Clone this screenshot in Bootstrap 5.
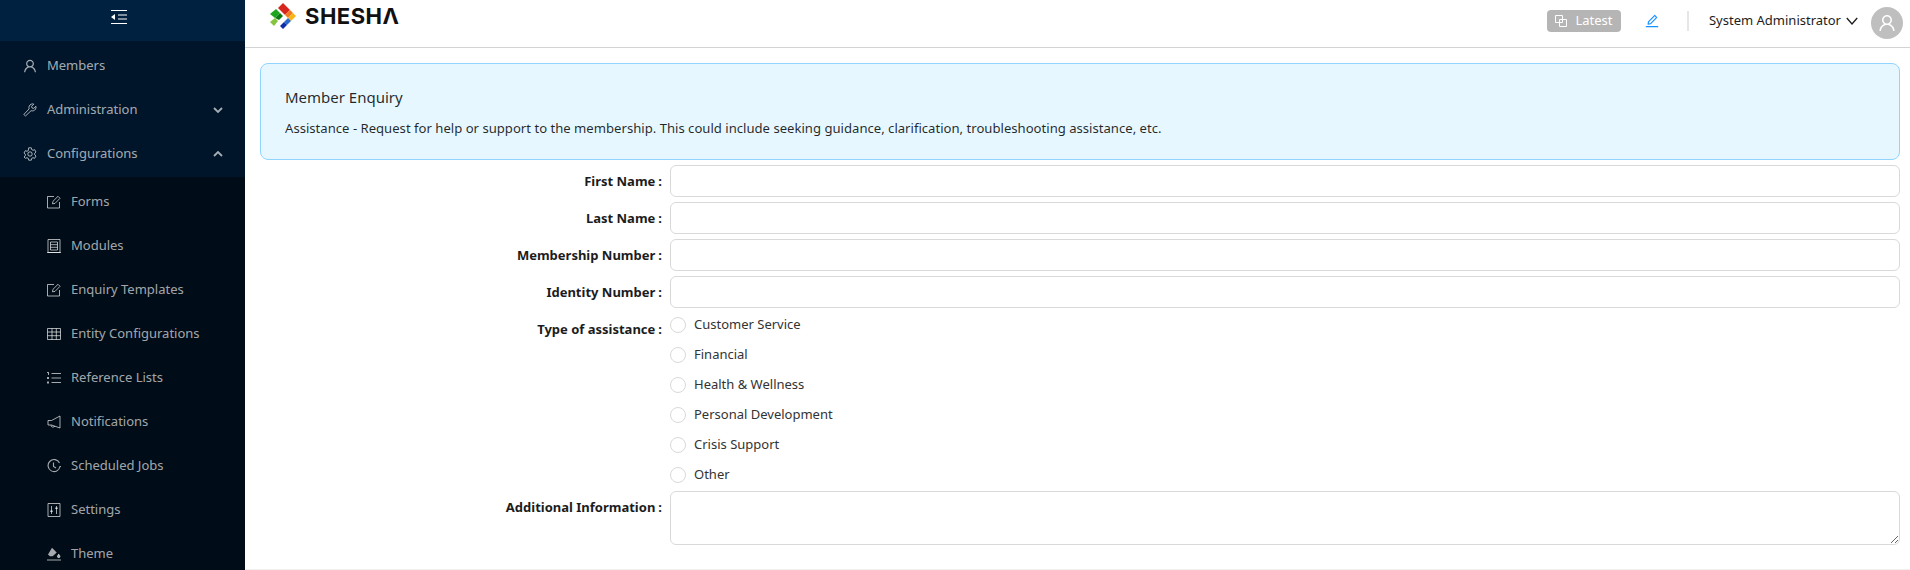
<!DOCTYPE html>
<html lang="en">
<head>
    <meta charset="UTF-8">
    <title>Member Enquiry</title>
    <link href="https://cdn.jsdelivr.net/npm/bootstrap@5.3.0/dist/css/bootstrap.min.css" rel="stylesheet">
    <style>
        html, body { height: 100%; }
        body {
            font-family: "Noto Sans", "Liberation Sans", sans-serif;
            font-size: 13px;
            color: rgba(0,0,0,.85);
            overflow: hidden;
        }
        .app-side {
            width: 245px;
            height: 570px;
            flex: none;
            background: #001529;
            color: rgba(255,255,255,.65);
            overflow: hidden;
        }
        .side-toggle {
            height: 41px;
            padding: 0 7px 7px 0;
            background: #002140;
            color: #fff;
        }
        .side-item {
            height: 40px;
            margin-bottom: 4px;
            padding: 2px 24px 0 23px;
            gap: 10px;
        }
        .side-group { height: 136px; padding-top: 4px; }
        .side-sub { background: #000c17; padding-top: 4px; }
        .side-sub .side-item { padding-left: 47px; }
        .side-ico { width: 14px; height: 14px; flex: none; }
        .side-caret { width: 10px; height: 10px; margin-left: auto; margin-right: -2px; }
        .app-main { min-width: 0; height: 570px; }
        .top-bar {
            height: 48px;
            border-bottom: 1px solid #d3d3d3;
            padding: 0 7px 0 25px;
        }
        .brand-box { margin-bottom: 16px; }
        .brand-name {
            font-family: Inter, "Liberation Sans", sans-serif;
            font-weight: 700;
            font-size: 22px;
            letter-spacing: .5px;
            color: #111;
            margin-left: 9px;
            line-height: 1;
        }
        .latest-tag {
            width: 74px;
            height: 22px;
            background: #b5b5b5;
            color: #fff;
            border-radius: 4px;
            gap: 8px;
        }
        .pen-btn { color: #1890ff; margin-left: 24px; line-height: 0; }
        .top-sep { width: 2px; height: 20px; background: #e6e6e6; margin: 0 20px 0 28px; }
        .user-tools { margin-bottom: 5px; }
        .user-name { color: #1d1d1d; }
        .user-caret { margin: 0 13px 0 5px; color: #1d1d1d; }
        .user-pic { width: 32px; height: 32px; margin-top: 4px; background: #bfbfbf; color: #fff; }
        .page-body { padding: 15px 10px 0 15px; border-bottom: 1px solid #f0f0f0; }
        .intro-box {
            height: 97px;
            padding: 21px 24px 0;
            margin-bottom: 5px;
            background: #e6f7ff;
            border: 1px solid #91d5ff;
            border-radius: 8px;
            color: rgba(0,0,0,.85);
        }
        .intro-title { font-size: 15px; line-height: 24px; margin-bottom: 9px; }
        .intro-text { font-size: 13.12px; line-height: 20px; }
        .field-row { display: flex; margin-bottom: 5px; }
        .field-label {
            width: 402px;
            flex: none;
            margin: 0 8px 0 0;
            text-align: right;
            font-weight: 700;
            color: #1c1c1c;
            line-height: 32px;
        }
        .field-label::after { content: ":"; margin-left: 3px; }
        .field-input.form-control {
            height: 32px;
            min-height: 0;
            padding: 4px 11px;
            font-size: 13px;
            border: 1px solid #d9d9d9;
            border-radius: 6px;
        }
        textarea.field-input.form-control { height: 54px; }
        .radio-line { height: 30px; gap: 8px; }
        .radio-line .form-check-input {
            width: 16px;
            height: 16px;
            margin: 0;
            border-color: #d9d9d9;
        }
        .radio-line label { color: #333; }
        .radio-stack { margin: -3px 0 -4px; }
    </style>
</head>
<body>
<svg width="0" height="0" class="position-absolute">
    <symbol id="i-edit" viewBox="0 0 14 14"><path d="M12.5 7v6h-12V1.5h6.5M5.500 8.800l.4-2.400L11 1.300l2 2-5 5.100z" fill="none" stroke="currentColor"/></symbol>
    <symbol id="i-user" viewBox="64 64 896 896"><path fill="currentColor" d="M858.5 763.6a374 374 0 0 0-80.6-119.5 375.63 375.63 0 0 0-119.5-80.6c-.4-.2-.8-.3-1.2-.5C719.5 518 760 444.7 760 362c0-137-111-248-248-248S264 225 264 362c0 82.7 40.5 156 102.8 201.1-.4.2-.8.3-1.2.5-44.8 18.9-85 46-119.5 80.6a375.63 375.63 0 0 0-80.6 119.5A371.7 371.7 0 0 0 136 901.8a8 8 0 0 0 8 8.2h60c4.4 0 7.9-3.5 8-7.8 2-77.2 33-149.5 87.8-204.3 56.7-56.7 132-87.9 212.2-87.9s155.5 31.2 212.2 87.9C779 752.7 810 825 812 902.2c.1 4.4 3.6 7.8 8 7.8h60a8 8 0 0 0 8-8.2c-1-47.8-10.9-94.3-29.5-138.2zM512 534c-45.9 0-89.1-17.9-121.6-50.4S340 407.9 340 362c0-45.9 17.9-89.1 50.4-121.6S466.1 190 512 190s89.1 17.9 121.6 50.4S684 316.1 684 362c0 45.9-17.9 89.1-50.4 121.6S557.9 534 512 534z"/></symbol>
    <symbol id="i-pen" viewBox="64 64 896 896"><path fill="currentColor" d="M257.7 752c2 0 4-.2 6-.5L431.9 722c2-.4 3.9-1.3 5.3-2.8l423.9-423.9a9.96 9.96 0 0 0 0-14.1L694.9 114.9c-1.9-1.9-4.4-2.9-7.1-2.9s-5.2 1-7.1 2.9L256.8 538.8c-1.5 1.5-2.4 3.3-2.8 5.3l-29.5 168.2a33.5 33.5 0 0 0 9.4 29.8c6.6 6.4 14.9 9.9 23.8 9.9zm67.4-174.4L687.8 215l73.3 73.3-362.7 362.6-88.9 15.7 15.6-89zM880 836H144c-17.7 0-32 14.3-32 32v36c0 4.4 3.6 8 8 8h784c4.4 0 8-3.6 8-8v-36c0-17.7-14.3-32-32-32z"/></symbol>
</svg>
<div class="d-flex">
    <aside class="app-side">
        <div class="side-toggle d-flex align-items-center justify-content-center">
            <svg width="16" height="14" viewBox="0 0 16 14"><path d="M0 .5h16M7 5h9M7 9h9M0 13.500h16" stroke="currentColor"/><path d="M0 7l4-3v6z" fill="currentColor"/></svg>
        </div>
        <div class="side-group">
            <div class="side-item d-flex align-items-center"><svg class="side-ico"><use href="#i-user"/></svg>Members</div>
            <div class="side-item d-flex align-items-center">
                <svg class="side-ico" viewBox="0 0 14 14"><path d="M.8 11.500l5.300-5.600c-.6-2 .2-3.800 2-4.700 1-.4 2-.4 2.700-.1L8.600 3.300l.4 1.700 1.700.4 2.200-2.100c.3 1 .2 2-.4 2.900-1 1.500-2.700 2-4.400 1.500l-5.500 5.200z" fill="none" stroke="currentColor"/></svg>
                Administration
                <svg class="side-caret" viewBox="0 0 10 10"><path d="M1 3l4 4 4-4" fill="none" stroke="currentColor" stroke-width="1.800"/></svg>
            </div>
            <div class="side-item d-flex align-items-center">
                <svg class="side-ico" viewBox="0 0 14 14"><path d="M5.700.8h2.600l.4 1.800 1.300.7 1.700-.6 1.300 2.300-1.300 1.200v1.600l1.300 1.200-1.300 2.300-1.700-.6-1.300.7-.4 1.800H5.700l-.4-1.800-1.300-.7-1.700.6L1 10l1.300-1.200V7.200L1 6l1.300-2.300 1.700.6 1.300-.7z" fill="none" stroke="currentColor"/><circle cx="7" cy="7" r="2.200" fill="none" stroke="currentColor"/></svg>
                Configurations
                <svg class="side-caret" viewBox="0 0 10 10"><path d="M1 7l4-4 4 4" fill="none" stroke="currentColor" stroke-width="1.800"/></svg>
            </div>
        </div>
        <div class="side-sub">
            <div class="side-item d-flex align-items-center"><svg class="side-ico"><use href="#i-edit"/></svg>Forms</div>
            <div class="side-item d-flex align-items-center">
                <svg class="side-ico" viewBox="0 0 14 14"><path d="M1 .5h12v13H1zM3.500 3h7v8h-7zM3.500 5.700h7M3.500 8.300h7M0 13.500h14" fill="none" stroke="currentColor"/></svg>
                Modules
            </div>
            <div class="side-item d-flex align-items-center"><svg class="side-ico"><use href="#i-edit"/></svg>Enquiry Templates</div>
            <div class="side-item d-flex align-items-center">
                <svg class="side-ico" viewBox="0 0 14 14"><path d="M.5 1.500h13v11H.5zM.5 5h13M.5 8.700h13M5 1.500v11M9.300 1.500v11" fill="none" stroke="currentColor"/></svg>
                Entity Configurations
            </div>
            <div class="side-item d-flex align-items-center">
                <svg class="side-ico" viewBox="0 0 14 14"><path d="M4.500 2.500H14M4.500 7H14M4.500 11.500H14" stroke="currentColor"/><path d="M0 1h2v3H1V2H0zM0 6h2v2H0zM0 10.500h2v2H0z" fill="currentColor"/></svg>
                Reference Lists
            </div>
            <div class="side-item d-flex align-items-center">
                <svg class="side-ico" viewBox="0 0 14 14"><path d="M13 1v12L4.500 10H1V5.500h3.500zM4 10.200a2 2 0 0 0 3.800.8" fill="none" stroke="currentColor"/></svg>
                Notifications
            </div>
            <div class="side-item d-flex align-items-center">
                <svg class="side-ico" viewBox="0 0 14 14"><path d="M12.500 4A6 6 0 1 0 13 7.500h1M6.500 3.500v4l2.500 1.500" fill="none" stroke="currentColor" stroke-width="1.100"/></svg>
                Scheduled Jobs
            </div>
            <div class="side-item d-flex align-items-center">
                <svg class="side-ico" viewBox="0 0 14 14"><path d="M1 .5h12v13H1zM4.500 3v8M9.500 3v8" fill="none" stroke="currentColor"/><path d="M3.200 7.500h2.600v1.500H3.200zM8.200 4.500h2.600V6H8.200z" fill="currentColor"/></svg>
                Settings
            </div>
            <div class="side-item d-flex align-items-center">
                <svg class="side-ico" viewBox="0 0 14 14"><path d="M5 .8l4.700 4.700-4 3.800H2.800L1 7.400z" fill="currentColor"/><path d="M11.700 7.200c.8 1 1.200 1.600 1.200 2.200a1.200 1.200 0 0 1-2.400 0c0-.6.400-1.200 1.200-2.200zM0 13h14" fill="currentColor" stroke="currentColor"/></svg>
                Theme
            </div>
        </div>
    </aside>

    <main class="app-main flex-grow-1 d-flex flex-column">
        <header class="top-bar d-flex align-items-center">
            <div class="brand-box d-flex align-items-center">
                <svg width="26" height="26" viewBox="0 0 26 26">
                    <path d="M13 0l7 7-5 5-7-7z" fill="#d7261e"/>
                    <path d="M20 7l3 3-5 5-3-3z" fill="#f47a1f"/>
                    <path d="M23 10l3 3-5 5-3-3z" fill="#f9b515"/>
                    <path d="M18 15l3 3-4 4-3-3z" fill="#2b6bd0"/>
                    <path d="M14 19l3 3-4 4-3-3z" fill="#0f2fa8"/>
                    <path d="M6 6l4 4-5 5-5-4z" fill="#1da51d"/>
                    <path d="M10 10l3 3-4 4-4-2z" fill="#0d7a14"/>
                    <path d="M5 15l3 3-4 5-4-4z" fill="#86c440"/>
                </svg>
                <span class="brand-name">SHESHΛ</span>
            </div>
            <div class="user-tools ms-auto d-flex align-items-center">
                <span class="latest-tag d-flex align-items-center justify-content-center">
                    <svg width="12" height="12" viewBox="0 0 12 12"><path d="M.5.500h7v7h-7zM4.500 4.500h7v7h-7z" fill="none" stroke="currentColor"/></svg>
                    Latest
                </span>
                <a class="pen-btn" href="#"><svg width="14" height="14"><use href="#i-pen"/></svg></a>
                <span class="top-sep"></span>
                <span class="user-name">System Administrator</span>
                <svg class="user-caret" width="12" height="12" viewBox="0 0 12 12"><path d="M.8 3l5.200 6 5.200-6" fill="none" stroke="currentColor" stroke-width="1.300"/></svg>
                <span class="user-pic rounded-circle d-flex align-items-center justify-content-center">
                    <svg width="18" height="18"><use href="#i-user"/></svg>
                </span>
            </div>
        </header>

        <div class="page-body flex-grow-1">
            <div class="intro-box">
                <div class="intro-title">Member Enquiry</div>
                <div class="intro-text">Assistance - Request for help or support to the membership. This could include seeking guidance, clarification, troubleshooting assistance, etc.</div>
            </div>
            <form>
                <div class="field-row"><label class="field-label" for="firstName">First Name</label><input class="form-control field-input" id="firstName" type="text"></div>
                <div class="field-row"><label class="field-label" for="lastName">Last Name</label><input class="form-control field-input" id="lastName" type="text"></div>
                <div class="field-row"><label class="field-label" for="memberNo">Membership Number</label><input class="form-control field-input" id="memberNo" type="text"></div>
                <div class="field-row"><label class="field-label" for="identityNo">Identity Number</label><input class="form-control field-input" id="identityNo" type="text"></div>
                <div class="field-row">
                    <span class="field-label">Type of assistance</span>
                    <div class="radio-stack">
                        <div class="radio-line d-flex align-items-center"><input class="form-check-input" type="radio" name="kind" id="k1"><label for="k1">Customer Service</label></div>
                        <div class="radio-line d-flex align-items-center"><input class="form-check-input" type="radio" name="kind" id="k2"><label for="k2">Financial</label></div>
                        <div class="radio-line d-flex align-items-center"><input class="form-check-input" type="radio" name="kind" id="k3"><label for="k3">Health &amp; Wellness</label></div>
                        <div class="radio-line d-flex align-items-center"><input class="form-check-input" type="radio" name="kind" id="k4"><label for="k4">Personal Development</label></div>
                        <div class="radio-line d-flex align-items-center"><input class="form-check-input" type="radio" name="kind" id="k5"><label for="k5">Crisis Support</label></div>
                        <div class="radio-line d-flex align-items-center"><input class="form-check-input" type="radio" name="kind" id="k6"><label for="k6">Other</label></div>
                    </div>
                </div>
                <div class="field-row"><label class="field-label" for="moreInfo">Additional Information</label><textarea class="form-control field-input" id="moreInfo"></textarea></div>
            </form>
        </div>
    </main>
</div>
</body>
</html>
